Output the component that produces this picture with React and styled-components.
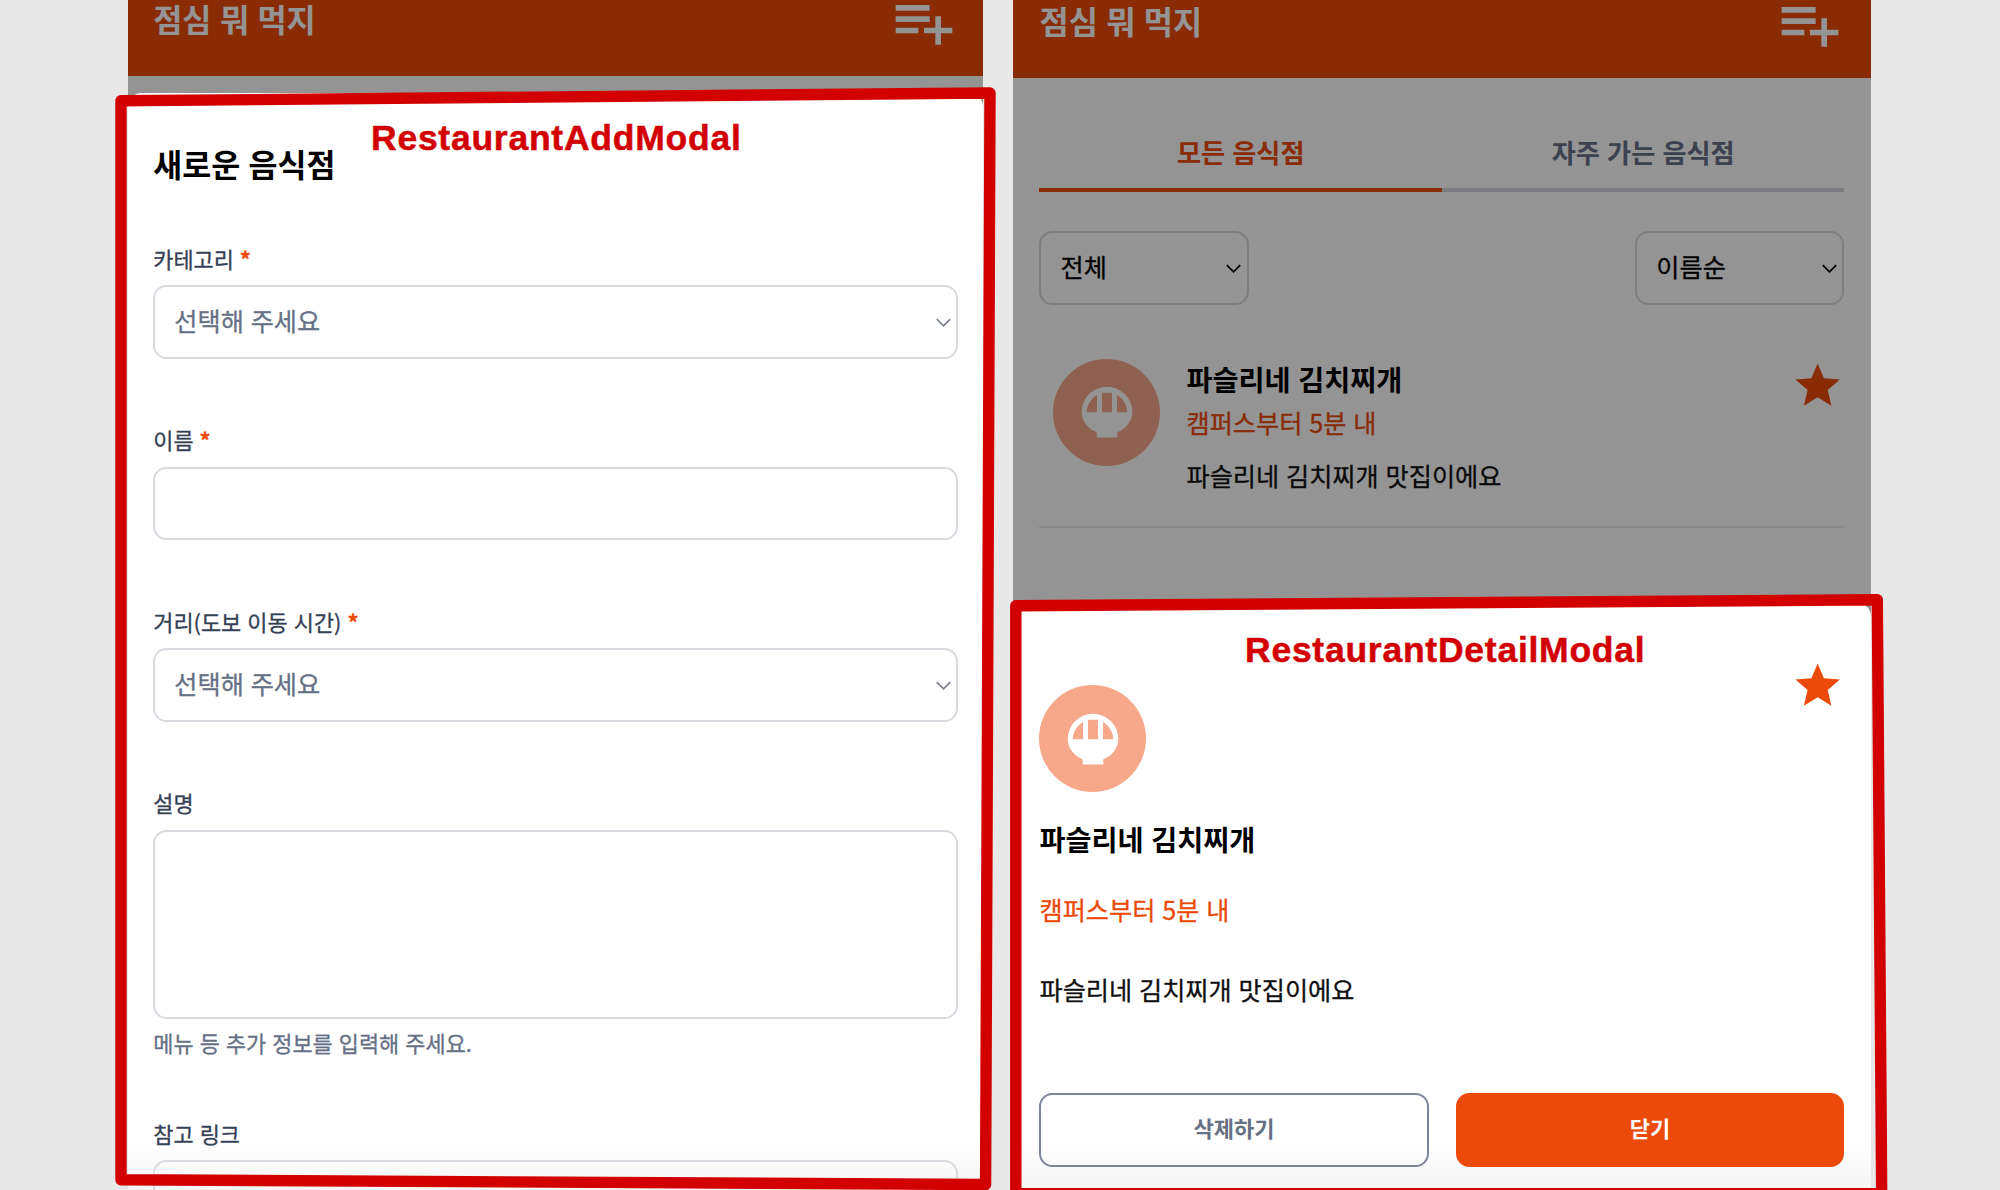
import React from 'react';
import styled, { createGlobalStyle } from 'styled-components';

const GlobalStyle = createGlobalStyle`
  * { box-sizing: border-box; }
  body {
    margin: 0;
    background: #e8e8e8;
    font-family: 'Noto Sans CJK KR', sans-serif;
    word-spacing: 0.075em;
    overflow: hidden;
  }
  h1, h2, h3, p { margin: 0; }
  svg { display: block; flex: none; }
`;

const Board = styled.div`
  position: relative;
  display: flex;
  gap: 29.7px;
  width: 2000px;
  height: 1190px;
  padding-left: 128px;
  overflow: hidden;
`;

const Screen = styled.section`
  position: relative;
  width: ${(p) => p.$width}px;
  height: 1190px;
  background: #fff;
  overflow: hidden;
`;

const Header = styled.header`
  display: flex;
  align-items: center;
  justify-content: space-between;
  height: 107px;
  margin-top: ${(p) => p.$shift}px;
  padding: 0 ${(p) => p.$pad}px 1.5px;
  background: #ec4a0a;
  color: #fff;
`;

const HeaderTitle = styled.h1`
  padding-bottom: 8.5px;
  font-size: 31.7px;
  line-height: 32px;
  font-weight: 700;
`;

const Dimmer = styled.div`
  position: absolute;
  inset: 0;
  background: rgba(0, 0, 0, 0.42);
`;

const Sheet = styled.div`
  position: absolute;
  left: 0;
  right: 0;
  bottom: 0;
  top: ${(p) => p.$top}px;
  display: flex;
  flex-direction: column;
  padding: ${(p) => p.$padding};
  border-radius: 13.4px 13.4px 0 0;
  background: linear-gradient(to top, #f5f5f5, #fff 50px);
  overflow: hidden;
`;

const SheetTitle = styled.h2`
  margin-bottom: 56px;
  font-size: 31.5px;
  line-height: 40px;
  font-weight: 700;
  color: #000;
`;

const Field = styled.div`
  display: flex;
  flex-direction: column;
  flex: none;
  margin-bottom: ${(p) => p.$gap ?? 61.2}px;
`;

const Label = styled.label`
  display: flex;
  gap: 6px;
  margin-bottom: 6.6px;
  font-size: 21.9px;
  line-height: 40px;
  color: #344054;
  -webkit-text-stroke: 0.3px;
`;

const Required = styled.span`
  color: #ec4a0a;
  font-weight: 700;
`;

const Box = styled.div`
  display: flex;
  align-items: center;
  justify-content: space-between;
  width: ${(p) => (p.$width ? `${p.$width}px` : '100%')};
  height: ${(p) => p.$height ?? 73.7}px;
  padding: 0 5.2px 0 19px;
  border: 2px solid #d8dae0;
  border-radius: 13.4px;
  font-size: 25.2px;
  line-height: 36px;
  color: ${(p) => p.$color ?? '#667085'};
  -webkit-text-stroke: 0.3px;
`;

const BoxText = styled.span`
  padding-bottom: 4.6px;
`;

const Help = styled.p`
  margin-top: 9.2px;
  font-size: 21.9px;
  line-height: 30px;
  color: #667085;
  -webkit-text-stroke: 0.3px;
`;

const Body = styled.div`
  padding: 0 26.5px;
`;

const Tabs = styled.nav`
  display: flex;
  height: 113.7px;
`;

const Tab = styled.div`
  flex: 1;
  display: flex;
  align-items: flex-end;
  justify-content: center;
  padding-bottom: 18.2px;
  border-bottom: 4px solid ${(p) => (p.$active ? '#ec4a0a' : '#d3d6dc')};
  font-size: 26.2px;
  line-height: 36px;
  font-weight: 700;
  color: ${(p) => (p.$active ? '#ec4a0a' : '#667085')};
`;

const Filters = styled.div`
  display: flex;
  justify-content: space-between;
  padding: 39.8px 0 40px;
`;

const Item = styled.article`
  display: flex;
  align-items: flex-start;
  height: 182.5px;
  padding: 13.5px 0 0 13.6px;
  border-bottom: 2px solid #ebebeb;
`;

const ItemInfo = styled.div`
  flex: 1;
  display: flex;
  flex-direction: column;
  padding-left: 26.4px;
`;

const Name = styled.h3`
  font-size: 28.3px;
  line-height: 40px;
  font-weight: 700;
  color: #000;
`;

const Distance = styled.p`
  font-size: 25.2px;
  line-height: 36px;
  color: #ec4a0a;
  -webkit-text-stroke: 0.3px;
`;

const Description = styled.p`
  font-size: 25.2px;
  line-height: 36px;
  color: #101010;
  -webkit-text-stroke: 0.3px;
`;

const ItemLines = styled(ItemInfo)`
  ${Distance} { margin-top: 5.6px; }
  ${Description} { margin-top: 17px; }
`;

const DetailTop = styled.div`
  display: flex;
  justify-content: space-between;
  align-items: flex-start;
  height: 134px;
`;

const IconDrop = styled.div`
  padding-top: 26px;
`;

const DetailLines = styled.div`
  display: flex;
  flex-direction: column;
  padding-top: 25.5px;
  height: 300.3px;
  ${Distance} { margin-top: 32px; }
  ${Description} { margin-top: 44.5px; }
`;

const Actions = styled.div`
  display: grid;
  grid-template-columns: 390px 388px;
  justify-content: space-between;
`;

const Button = styled.button`
  height: 73.7px;
  padding: 0 1px 6px 0;
  border: 2px solid ${(p) => (p.$primary ? '#ec4a0a' : '#7d8698')};
  border-radius: 13.4px;
  background: ${(p) => (p.$primary ? '#ec4a0a' : 'transparent')};
  color: ${(p) => (p.$primary ? '#fff' : '#667085')};
  font-family: inherit;
  font-size: 22px;
  font-weight: 700;
`;

const Badge = styled.div`
  flex: none;
  display: flex;
  align-items: center;
  justify-content: center;
  width: 107px;
  height: 107px;
  border-radius: 50%;
  background: #f7a78a;
`;

const FrameLayer = styled.svg`
  position: absolute;
  inset: 0;
`;

const NoteText = styled.div`
  position: absolute;
  left: ${(p) => p.$x}px;
  top: ${(p) => p.$y}px;
  font-family: 'Liberation Sans', Arial, sans-serif;
  font-size: 35.5px;
  line-height: 44px;
  font-weight: 700;
  letter-spacing: 0.75px;
  color: #d20000;
  -webkit-text-stroke: 0.5px #d20000;
  stroke-linejoin: round;
  white-space: nowrap;
`;

const PlaylistAdd = () => (
  <svg width="68" height="68" viewBox="0 0 24 24" fill="#fff">
    <path d="M14 10H2v2h12v-2zm0-4H2v2h12V6zm4 8v-4h-2v4h-4v2h4v4h2v-4h4v-2h-4zM2 16h8v-2H2v2z" />
  </svg>
);

const Star = () => (
  <svg width="53.3" height="53.3" viewBox="0 0 24 24" fill="#ec4a0a">
    <path d="M12 17.27L18.18 21l-1.64-7.03L22 9.24l-7.19-.61L12 2 9.19 8.63 2 9.24l5.46 4.73L5.82 21z" />
  </svg>
);

const Chevron = ({ color }) => (
  <svg width="15" height="11" viewBox="0 -1 15 11" fill="none" stroke={color} strokeWidth="1.8">
    <path d="M0.8 1.2L7.5 7.8L14.2 1.2" />
  </svg>
);

const Bowl = () => (
  <Badge>
    <svg width="52" height="52" viewBox="-26 -26 52 52" fill="#fff" fillRule="evenodd">
      <path d="M-25.3 0A25.3 25.3 0 0 1 25.3 0C25.3 9 19 17 10.3 20.3V25.5H-10.3V20.3C-19 17-25.3 9-25.3 0ZM-5-19.3V.3H5V-19.3ZM-20.3.3H-10V-17C-15-14-20-8-20.3.3ZM20.3.3H10V-17C15-14 20-8 20.3.3Z" />
    </svg>
  </Badge>
);

const Select = ({ text, width, color, arrow }) => (
  <Box $width={width} $color={color}>
    <BoxText>{text}</BoxText>
    <Chevron color={arrow} />
  </Box>
);

const FieldLabel = ({ text, required }) => (
  <Label>
    {text}
    {required && <Required>*</Required>}
  </Label>
);

const AddScreen = () => (
  <Screen $width={855.3}>
    <Header $shift={-31} $pad={25.2}>
      <HeaderTitle>점심 뭐 먹지</HeaderTitle>
      <PlaylistAdd />
    </Header>
    <Dimmer />
    <Sheet $top={93} $padding="49.7px 25.3px 0">
      <SheetTitle>새로운 음식점</SheetTitle>
      <Field>
        <FieldLabel text="카테고리" required />
        <Select text="선택해 주세요" arrow="#7d8290" />
      </Field>
      <Field>
        <FieldLabel text="이름" required />
        <Box />
      </Field>
      <Field>
        <FieldLabel text="거리(도보 이동 시간)" required />
        <Select text="선택해 주세요" arrow="#7d8290" />
      </Field>
      <Field $gap={56}>
        <FieldLabel text="설명" />
        <Box $height={189} />
        <Help>메뉴 등 추가 정보를 입력해 주세요.</Help>
      </Field>
      <Field>
        <FieldLabel text="참고 링크" />
        <Box />
      </Field>
    </Sheet>
  </Screen>
);

const DetailScreen = () => (
  <Screen $width={858}>
    <Header $shift={-29} $pad={26.5}>
      <HeaderTitle>점심 뭐 먹지</HeaderTitle>
      <PlaylistAdd />
    </Header>
    <Body>
      <Tabs>
        <Tab $active>모든 음식점</Tab>
        <Tab>자주 가는 음식점</Tab>
      </Tabs>
      <Filters>
        <Select text="전체" width={209.2} color="#000" arrow="#000" />
        <Select text="이름순" width={209.2} color="#000" arrow="#000" />
      </Filters>
      <Item>
        <Bowl />
        <ItemLines>
          <Name>파슬리네 김치찌개</Name>
          <Distance>캠퍼스부터 5분 내</Distance>
          <Description>파슬리네 김치찌개 맛집이에요</Description>
        </ItemLines>
        <Star />
      </Item>
    </Body>
    <Dimmer />
    <Sheet $top={603} $padding="56px 26.5px 0">
      <DetailTop>
        <IconDrop>
          <Bowl />
        </IconDrop>
        <Star />
      </DetailTop>
      <DetailLines>
        <Name>파슬리네 김치찌개</Name>
        <Distance>캠퍼스부터 5분 내</Distance>
        <Description>파슬리네 김치찌개 맛집이에요</Description>
      </DetailLines>
      <Actions>
        <Button>삭제하기</Button>
        <Button $primary>닫기</Button>
      </Actions>
    </Sheet>
  </Screen>
);

export default function App() {
  return (
    <>
      <GlobalStyle />
      <Board>
        <AddScreen />
        <DetailScreen />
        <FrameLayer width="2000" height="1190" fill="none" stroke="#d20000" strokeWidth="11.4" strokeLinejoin="round">
          <path d="M121 100.8L990 93L985.6 1184.5L121 1179.8Z" />
          <path d="M1015.8 605.8L1877.3 599.8L1881.7 1193.8L1015.8 1193.8Z" />
        </FrameLayer>
        <NoteText $x={371} $y={115.6}>RestaurantAddModal</NoteText>
        <NoteText $x={1245} $y={627.5}>RestaurantDetailModal</NoteText>
      </Board>
    </>
  );
}
